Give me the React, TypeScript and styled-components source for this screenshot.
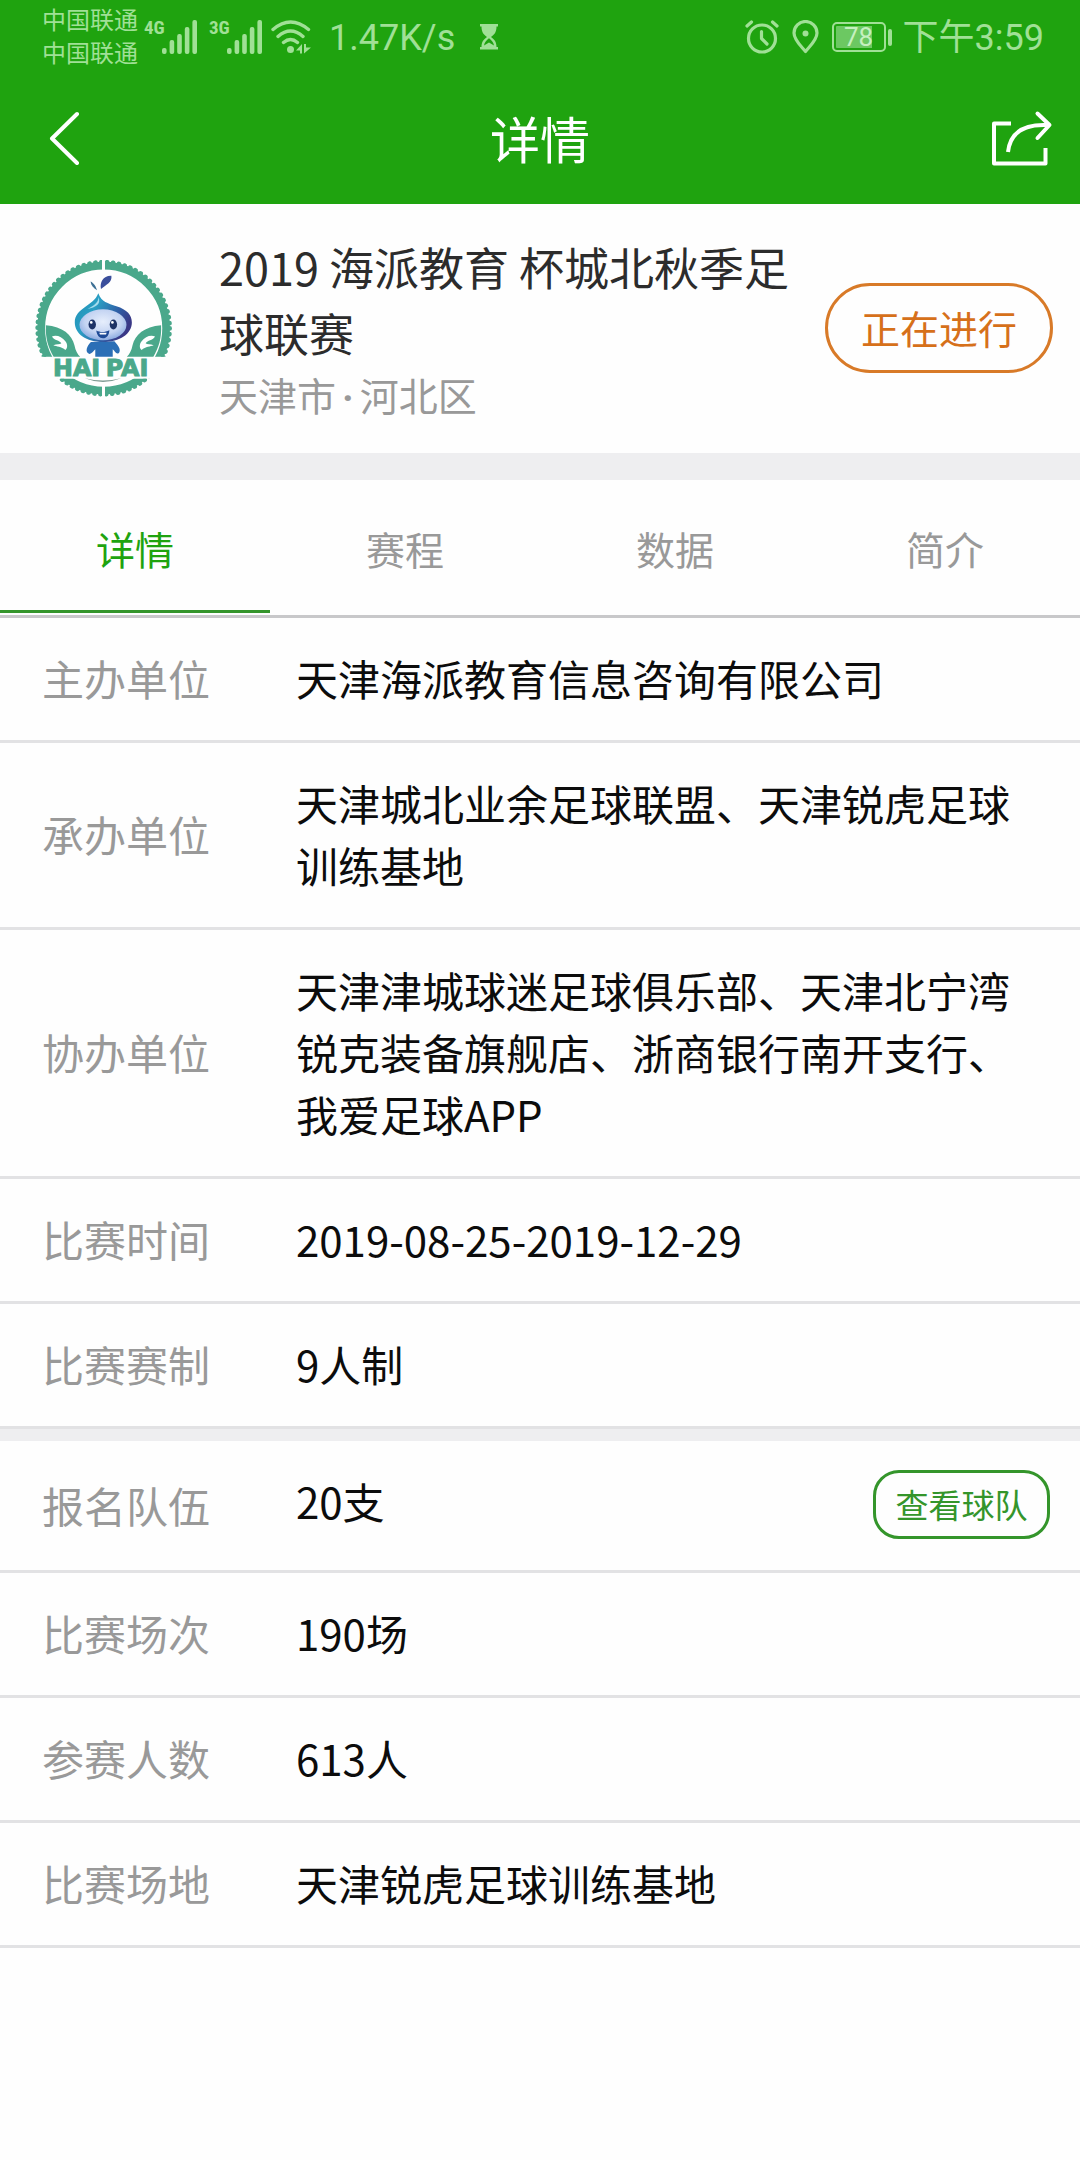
import React, { useState } from "react";
import styled, { createGlobalStyle } from "styled-components";

const GREEN = "#1fa30f";
const STATUS = "#a0e096";
const LINE = "#e2e2e4";
const BAND = "#eeeef0";

const GlobalStyle = createGlobalStyle`
  *, *::before, *::after { box-sizing: border-box; }
  body {
    margin: 0;
    background: #fefefe;
    font-family: "Noto Sans CJK SC", "Noto Sans", sans-serif;
    color: #0c0c0c;
  }
  button { font-family: inherit; cursor: pointer; }
  svg { display: block; flex: none; }
`;

const Page = styled.div`
  display: flex;
  flex-direction: column;
  min-height: 100vh;
`;

const Header = styled.header`
  background: ${GREEN};
`;

const StatusBar = styled.div`
  display: flex;
  justify-content: space-between;
  height: 72px;
  padding: 4px 36px 0 42px;
  color: ${STATUS};
`;

const StatusGroup = styled.div<{ $gap: number }>`
  display: flex;
  align-items: center;
  height: 66px;
  gap: ${(p) => p.$gap}px;
`;

const Carriers = styled.div`
  padding-bottom: 4px;
  font-size: 24px;
  line-height: 33px;
`;

const Signals = styled.div`
  display: flex;
  gap: 12px;
  margin-left: -3px;
`;

const Signal = styled.div`
  display: flex;
  align-items: flex-start;
  height: 34px;
`;

const Network = styled.span`
  width: 18px;
  font: 700 19px/15px "Liberation Sans Narrow", "Roboto Condensed", "Roboto", sans-serif;
`;

const Speed = styled.span`
  padding: 2px 16px 0 9px;
  font: 400 36px/42px "Roboto", sans-serif;
`;

const Clock = styled.span`
  padding-top: 2px;
  font: 400 36px/42px "Roboto", "Noto Sans CJK SC", sans-serif;
`;

const Battery = styled.span`
  display: flex;
  align-items: center;
  gap: 2px;
  margin-right: -2px;

  &::after {
    content: "";
    width: 4px;
    height: 17px;
    border-radius: 2px;
    background: ${STATUS};
  }
`;

const BatteryCase = styled.span`
  width: 54px;
  height: 30px;
  border: 2px solid ${STATUS};
  border-radius: 5px;
  background: linear-gradient(90deg, #6cc862 78%, transparent 78%) content-box;
  padding: 2px;
  font: 400 26px/22px "Roboto", sans-serif;
  text-align: center;
  color: #c5f0bf;
`;

const NavBar = styled.div`
  display: grid;
  grid-template-columns: 1fr auto 1fr;
  align-items: center;
  height: 132px;
  padding: 0 27px 0 43px;
  color: #fff;
`;

const NavTitle = styled.h1`
  margin: 0;
  padding: 0 16px 2px 0;
  font-size: 50px;
  line-height: 72px;
  font-weight: 400;
`;

const IconButton = styled.button<{ $end?: boolean }>`
  justify-self: ${(p) => (p.$end ? "end" : "start")};
  padding: 0;
  border: 0;
  background: none;
  color: inherit;
`;

const Card = styled.section`
  display: flex;
  align-items: center;
  padding: 30px 27px 31px 34px;
  border-bottom: 27px solid ${BAND};
`;

const CardText = styled.div`
  flex: 1;
  min-width: 0;
  margin: 0 20px 0 45px;
`;

const CardTitle = styled.h2`
  margin: 0;
  font-size: 45px;
  line-height: 66px;
  font-weight: 400;
  color: #2c2c2c;
`;

const Place = styled.p`
  margin: 0;
  font-size: 39px;
  line-height: 56px;
  color: #999;
`;

const Dot = styled.span`
  padding: 0 6px;
  font-family: "Roboto", sans-serif;
  font-weight: 700;
  line-height: 1;
`;

const Status = styled.button`
  width: 228px;
  height: 90px;
  padding: 0 0 2px;
  border: 3px solid #d87a28;
  border-radius: 45px;
  background: none;
  font-size: 39px;
  line-height: 60px;
  color: #d6701a;
`;

const Tabs = styled.nav`
  display: grid;
  grid-template-columns: repeat(4, 1fr);
  padding-bottom: 2px;
  border-bottom: 3px solid #c8c8ca;
`;

const Tab = styled.button<{ $active: boolean }>`
  padding: 38px 0 32px;
  border: 0;
  border-bottom: 3px solid ${(p) => (p.$active ? "#34952b" : "transparent")};
  background: none;
  font-size: 39px;
  line-height: 60px;
  color: ${(p) => (p.$active ? GREEN : "#999")};
`;

const List = styled.dl<{ $band?: boolean }>`
  margin: 0;
  border-bottom: ${(p) => (p.$band ? `12px solid ${BAND}` : "0")};
`;

const Row = styled.div`
  display: flex;
  align-items: center;
  padding: 29px 30px 31px 42px;
  border-bottom: 3px solid ${LINE};
`;

const Label = styled.dt`
  flex: none;
  width: 254px;
  font-size: 42px;
  line-height: 62px;
  color: #999;
`;

const Value = styled.dd`
  flex: 1;
  align-self: flex-start;
  margin: 0;
  font-size: 42px;
  line-height: 62px;
`;

const TeamsButton = styled.button`
  width: 177px;
  height: 69px;
  padding: 0 0 1px;
  border: 3px solid #34952b;
  border-radius: 26px;
  background: none;
  font-size: 33px;
  line-height: 50px;
  color: #34952b;
`;

const SignalBars = () => (
  <svg width="35" height="34" viewBox="0 0 35 34" fill="currentColor">
    {[6, 14, 20, 27, 34].map((h, i) => (
      <rect key={h} x={i * 7.6} y={34 - h} width="4.6" height={h} rx="2" />
    ))}
  </svg>
);

const WifiIcon = () => (
  <svg width="40" height="34" viewBox="0 0 40 34" fill="none" stroke="currentColor" strokeWidth="3.4" strokeLinecap="round">
    <path d="M2 9.500Q19.500 -5.500 37.500 9.500M7 16.500Q19.500 5.500 32 16.500M12.500 22.500Q19.500 16.500 26.500 22.500" />
    <circle cx="19.500" cy="29.500" r="3.500" fill="currentColor" stroke="none" />
    <path d="M25 30.500L31 24V33.500H29V30.500ZM33 24H35V27.500H40L33 33.500Z" fill="currentColor" stroke="none" />
  </svg>
);

const HourglassIcon = () => (
  <svg width="18" height="26" viewBox="0 0 18 26" fill="currentColor">
    <path d="M0 0H18V2.500H16.500C16.500 8 14.500 10.500 11 13C14.500 15.500 16.500 18 16.500 23H18V25.500H0V23H1.500C1.500 18 3.500 15.500 7 13C3.500 10.500 1.500 8 1.500 2.500H0Z" />
    <path d="M8.500 14.500H9.500C11.500 16.500 13.500 18 14 21.500L9 18.500L4 21.500C4.500 18 6.500 16.500 8.500 14.500Z" fill={GREEN} />
  </svg>
);

const AlarmIcon = () => (
  <svg width="34" height="34" viewBox="0 0 34 34" fill="none" stroke="currentColor" strokeWidth="3.200" strokeLinecap="round" strokeLinejoin="round">
    <circle cx="17" cy="18.500" r="13.500" />
    <path d="M16.500 11.500V18.500L22 24M2 6L6.500 2M32 6L27.500 2" />
  </svg>
);

const PinIcon = () => (
  <svg width="27" height="34" viewBox="0 0 27 34" fill="none" stroke="currentColor" strokeWidth="3.200">
    <path d="M13.500 31.500C9 26 2 20 2 13A11.500 11.500 0 0 1 25 13C25 20 18 26 13.500 31.500Z" strokeLinejoin="round" />
    <circle cx="13.500" cy="13.500" r="3" fill="currentColor" stroke="none" />
  </svg>
);

const BackIcon = () => (
  <svg width="42" height="54" viewBox="0 0 42 54" fill="none" stroke="currentColor" strokeWidth="4" strokeLinecap="round" strokeLinejoin="round">
    <path d="M34 3L9 27.500L34 52" />
  </svg>
);

const ShareIcon = () => (
  <svg width="62" height="56" viewBox="0 0 62 56" fill="none" stroke="currentColor" strokeWidth="4" strokeLinejoin="round">
    <path d="M20 13.500H3V53.500H54.500V38" />
    <path d="M17 42C19 24 31 14 56 15" />
    <path d="M46.500 3.500L58.500 15L46.500 28" strokeLinecap="round" />
  </svg>
);

const LEAF = "M80 258C130 262 158 286 165 318C168 334 174 345 182 352H103C88 325 78 300 80 258Z";
const SWIRL = "M98 292C110 286 128 292 138 306C146 316 144 328 138 332C126 322 112 322 102 318C112 314 122 316 126 312C120 302 106 306 98 292Z";

const TeamLogo = () => (
  <svg width="140" height="137" viewBox="46 64 414 408" role="img" aria-label="HAIPAI">
    <defs>
      <linearGradient id="drop" x1="0" y1="0" x2="1" y2="0.500">
        <stop offset="0" stopColor="#1f8fb4" />
        <stop offset="0.400" stopColor="#2a9fc4" />
        <stop offset="0.750" stopColor="#2f5fa6" />
        <stop offset="1" stopColor="#3a3886" />
      </linearGradient>
      <radialGradient id="face" cx="0.500" cy="0.400" r="0.650">
        <stop offset="0" stopColor="#e6eefc" />
        <stop offset="0.600" stopColor="#c3d3f2" />
        <stop offset="1" stopColor="#7fa2dc" />
      </radialGradient>
      <clipPath id="ringParts">
        <path d="M40 60H247V352H40ZM256 60H470V352H256ZM40 418H247V480H40ZM256 418H470V480H256Z" />
      </clipPath>
    </defs>
    <g clipPath="url(#ringParts)" fill="none" stroke="#4aa88b">
      <circle cx="252" cy="267" r="186" strokeWidth="23" />
      <circle cx="252" cy="267" r="197" strokeWidth="13" strokeLinecap="round" strokeDasharray="1 16.680" />
    </g>
    <path d={LEAF} fill="#4aa88b" />
    <path d={SWIRL} fill="#fff" />
    <g transform="matrix(-1 0 0 1 503 0)">
      <path d={LEAF} fill="#4aa88b" />
      <path d={SWIRL} fill="#fff" />
    </g>
    <path d="M213 128C222 132 230 144 232 154C222 148 214 140 213 128Z" fill="#3c6f94" />
    <path d="M244 150C240 132 250 110 275 111C278 130 260 138 244 150Z" fill="#3b4f9c" />
    <path d="M214 308C200 322 198 336 206 342C214 348 220 336 227 330V352H279V330C286 336 290 348 298 340C304 330 296 320 284 306Z" fill="#2b6fb6" />
    <path d="M236 163C246 190 264 192 290 202C322 212 336 228 336 250C336 284 300 308 250 308C200 308 166 284 166 250C166 206 222 202 236 163Z" fill="url(#drop)" />
    <path d="M236 174C238 190 222 200 204 210C228 204 246 196 236 174Z" fill="#a4dced" />
    <ellipse cx="250" cy="257" rx="70" ry="46" fill="url(#face)" />
    <ellipse cx="218" cy="256" rx="11" ry="15" fill="#1d3266" />
    <ellipse cx="281" cy="256" rx="11" ry="15" fill="#1d3266" />
    <circle cx="215" cy="250" r="4" fill="#fff" />
    <circle cx="278" cy="250" r="4" fill="#fff" />
    <path d="M230 274C242 280 256 280 269 273C268 288 261 297 250 297C239 297 232 288 230 274Z" fill="#1e4a96" />
    <path d="M239 281H261L259 286H241Z" fill="#fff" />
    <path d="M196 416Q250 430 304 416Q250 438 196 416Z" fill="#7d9a92" />
    <g fontFamily="DejaVu Sans, sans-serif" fontWeight="700" fontSize="71" fill="#4aa88b" stroke="#4aa88b" strokeWidth="3">
      <text x="101" y="409">HAI</text>
      <text x="258" y="409">PAI</text>
    </g>
  </svg>
);

const TABS = ["详情", "赛程", "数据", "简介"];

const ORGANISERS = [
  ["主办单位", "天津海派教育信息咨询有限公司"],
  ["承办单位", "天津城北业余足球联盟、天津锐虎足球训练基地"],
  ["协办单位", "天津津城球迷足球俱乐部、天津北宁湾锐克装备旗舰店、浙商银行南开支行、我爱足球APP"],
  ["比赛时间", "2019-08-25-2019-12-29"],
  ["比赛赛制", "9人制"],
];

const FIGURES = [
  ["报名队伍", "20支"],
  ["比赛场次", "190场"],
  ["参赛人数", "613人"],
  ["比赛场地", "天津锐虎足球训练基地"],
];

export default function App() {
  const [tab, setTab] = useState(0);

  return (
    <Page>
      <GlobalStyle />
      <Header>
        <StatusBar>
          <StatusGroup $gap={9}>
            <Carriers>
              <div>中国联通</div>
              <div>中国联通</div>
            </Carriers>
            <Signals>
              <Signal>
                <Network>4G</Network>
                <SignalBars />
              </Signal>
              <Signal>
                <Network>3G</Network>
                <SignalBars />
              </Signal>
            </Signals>
            <WifiIcon />
            <Speed>1.47K/s</Speed>
            <HourglassIcon />
          </StatusGroup>
          <StatusGroup $gap={13}>
            <AlarmIcon />
            <PinIcon />
            <Battery>
              <BatteryCase>78</BatteryCase>
            </Battery>
            <Clock>下午3:59</Clock>
          </StatusGroup>
        </StatusBar>
        <NavBar>
          <IconButton aria-label="返回">
            <BackIcon />
          </IconButton>
          <NavTitle>详情</NavTitle>
          <IconButton $end aria-label="分享">
            <ShareIcon />
          </IconButton>
        </NavBar>
      </Header>

      <main>
        <Card>
          <TeamLogo />
          <CardText>
            <CardTitle>2019 海派教育 杯城北秋季足球联赛</CardTitle>
            <Place>
              天津市<Dot>·</Dot>河北区
            </Place>
          </CardText>
          <Status>正在进行</Status>
        </Card>

        <Tabs>
          {TABS.map((name, i) => (
            <Tab key={name} $active={i === tab} onClick={() => setTab(i)}>
              {name}
            </Tab>
          ))}
        </Tabs>

        <List $band>
          {ORGANISERS.map(([label, value]) => (
            <Row key={label}>
              <Label>{label}</Label>
              <Value>{value}</Value>
            </Row>
          ))}
        </List>
        <List>
          {FIGURES.map(([label, value], i) => (
            <Row key={label}>
              <Label>{label}</Label>
              <Value>{value}</Value>
              {i === 0 && <TeamsButton>查看球队</TeamsButton>}
            </Row>
          ))}
        </List>
      </main>
    </Page>
  );
}
